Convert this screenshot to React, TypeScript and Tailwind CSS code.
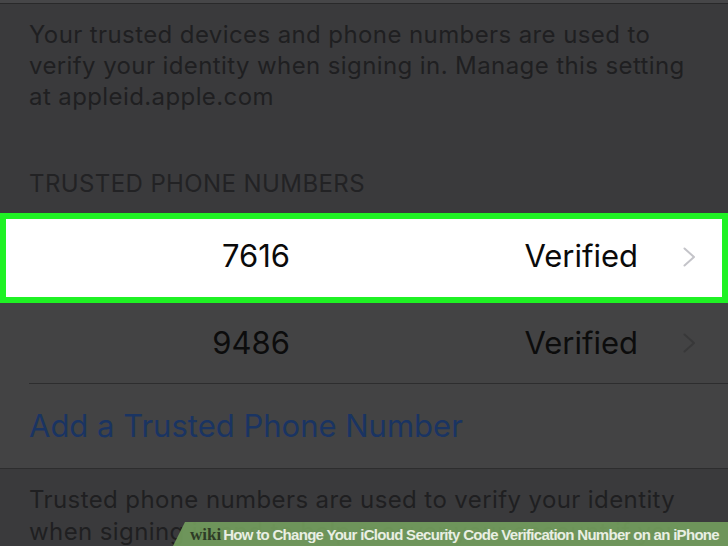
import type { ReactNode } from 'react'

interface PhoneRowProps {
  digits: string
  highlighted?: boolean
}

function Chevron({ className }: { className: string }) {
  return (
    <svg width="13" height="20" viewBox="0 0 13 20" fill="none" className={className} aria-hidden="true">
      <path d="M1.5 1.5 L11 10 L1.5 18.5" stroke="currentColor" strokeWidth="2" strokeLinecap="round" strokeLinejoin="round" />
    </svg>
  )
}

function PhoneRow({ digits, highlighted }: PhoneRowProps) {
  if (highlighted) {
    return (
      <div className="flex h-[90px] items-center border-[6px] border-[#1ff224] bg-white pb-[3px] pr-[26px] text-[31px] text-[#0a0a0a]">
        <span className="w-[284px] text-right">{digits}</span>
        <span className="flex-1" />
        <span>Verified</span>
        <Chevron className="ml-[45px] text-[#c4c4c9]" />
      </div>
    )
  }
  return (
    <div className="flex h-[80px] items-center bg-[#434344] pr-[32px] text-[31px] text-[#0c0c0c]">
      <span className="w-[290px] text-right">{digits}</span>
      <span className="flex-1" />
      <span>Verified</span>
      <Chevron className="ml-[45px] text-[#383839]" />
    </div>
  )
}

function Watermark({ children }: { children: ReactNode }) {
  return (
    <div className="absolute bottom-0 right-0 flex h-[24px] w-[555px] items-center bg-[#74a05e]/90 pl-[17px] [clip-path:polygon(12px_0,100%_0,100%_100%,0_100%)]">
      <span className="font-['Liberation_Serif',serif] text-[17px] font-bold leading-none text-[#2e3c27]">wiki</span>
      <span className="ml-[2px] whitespace-nowrap font-['Liberation_Sans',sans-serif] text-[15px] font-bold leading-none tracking-[-0.7px] text-[#e9efe3]">
        {children}
      </span>
    </div>
  )
}

export default function App() {
  return (
    <div className="relative h-[546px] w-[728px] overflow-hidden bg-[#3a3a3c] font-['Inter',sans-serif]">
      {/* top edge of the previous section */}
      <div className="h-[4px] border-b border-[#29292a] bg-[#464648]" />

      <p className="px-[29px] pt-[15px] text-[24px] leading-[31px] tracking-[0.4px] text-[#1f1f21]">
        Your trusted devices and phone numbers are used to verify your identity when signing in. Manage this setting at appleid.apple.com
      </p>

      <div className="px-[29px] pb-[15px] pt-[58px] text-[24px] uppercase leading-[28px] tracking-[0.4px] text-[#222224]">
        Trusted Phone Numbers
      </div>

      <PhoneRow digits="7616" highlighted />
      <PhoneRow digits="9486" />
      <div className="bg-[#434344] pl-[29px]">
        <div className="h-px bg-[#2d2d2e]" />
      </div>

      <div className="flex h-[84px] items-center bg-[#434344] px-[29px] text-[31px] text-[#1a3462]">
        Add a Trusted Phone Number
      </div>
      <div className="h-px bg-[#2d2d2e]" />

      <p className="px-[29px] pt-[15px] text-[24px] leading-[32px] tracking-[0.4px] text-[#1f1f21]">
        Trusted phone numbers are used to verify your identity when signing in and to help recover your account if you forget your password.
      </p>

      <Watermark>How to Change Your iCloud Security Code Verification Number on an iPhone</Watermark>
    </div>
  )
}
